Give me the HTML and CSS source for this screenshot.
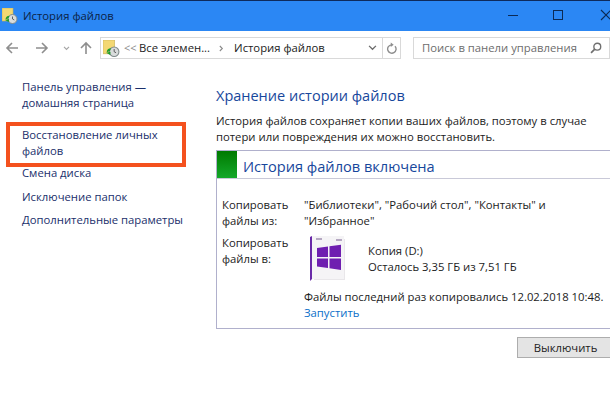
FILE: index.html
```html
<!DOCTYPE html>
<html lang="ru">
<head>
<meta charset="utf-8">
<title>История файлов</title>
<link rel="stylesheet" href="styles.css">
</head>
<body>
<div class="window">
  <header class="titlebar">
    <svg class="app-icon" viewBox="0 0 16 16" width="16" height="16"><rect x="0" y="0" width="11" height="13" fill="#f3d873"/><rect x="0" y="0" width="11" height="13" fill="none" stroke="#c9b35c" stroke-width=".6"/><circle cx="10.500" cy="11" r="4.500" fill="#d9dcdc" stroke="#7f8a8a"/><path d="M10.500 8.500V11l1.800 1" fill="none" stroke="#444" stroke-width=".8"/><path d="M3.500 11.500a4 4 0 0 1 4-3.800l-1 2.600z M3 12l3.800 2 .3-3z" fill="#1f9e2c"/></svg>
    <span class="title">История файлов</span>
    <div class="controls">
      <span class="ctl-min"></span>
      <span class="ctl-max"></span>
      <svg class="ctl-close" viewBox="0 0 12 12" width="12" height="12"><path d="M1 1l10 10M11 1L1 11" stroke="#0b2a55" stroke-width="1.100"/></svg>
    </div>
  </header>

  <nav class="toolbar">
    <svg class="nav nav-back" viewBox="0 0 14 14" width="14" height="14"><path d="M13 7H2M7 2L2 7l5 5" fill="none" stroke="#8e8e8e" stroke-width="1.600"/></svg>
    <svg class="nav nav-fwd" viewBox="0 0 14 14" width="14" height="14"><path d="M1 7h11M7 2l5 5-5 5" fill="none" stroke="#8e8e8e" stroke-width="1.600"/></svg>
    <svg class="nav nav-down" viewBox="0 0 8 6" width="7" height="5"><path d="M1 1l3 3 3-3" fill="none" stroke="#a5a5a5" stroke-width="1.400"/></svg>
    <svg class="nav nav-up" viewBox="0 0 14 14" width="14" height="14"><path d="M7 13V2M2 7l5-5 5 5" fill="none" stroke="#8e8e8e" stroke-width="1.600"/></svg>
    <div class="address">
      <svg class="addr-icon" viewBox="0 0 16 16" width="17" height="17"><rect x="0" y="0" width="11" height="13" fill="#f3d873"/><rect x="0" y="0" width="11" height="13" fill="none" stroke="#c9b35c" stroke-width=".6"/><circle cx="10.500" cy="11" r="4.500" fill="#d9dcdc" stroke="#7f8a8a"/><path d="M10.500 8.500V11l1.800 1" fill="none" stroke="#444" stroke-width=".8"/><path d="M3.500 11.500a4 4 0 0 1 4-3.800l-1 2.600z M3 12l3.800 2 .3-3z" fill="#1f9e2c"/></svg>
      <span class="crumb-more">&lt;&lt;</span>
      <span class="crumb">Все элемен...</span>
      <svg class="crumb-sep" viewBox="0 0 6 8" width="5" height="7"><path d="M1 1l3 3-3 3" fill="none" stroke="#8a8a8a" stroke-width="1.300"/></svg>
      <span class="crumb">История файлов</span>
      <svg class="addr-down" viewBox="0 0 10 7" width="9" height="6"><path d="M1 1l4 4 4-4" fill="none" stroke="#6b6b6b" stroke-width="1.500"/></svg>
      <span class="addr-refresh">
        <svg viewBox="0 0 12 14" width="11" height="13"><path d="M9.800 4.500A4.600 4.600 0 1 1 6 3" fill="none" stroke="#8e8e8e" stroke-width="1.500"/><path d="M5.200 .4L8.400 3 5.200 5.400z" fill="#8e8e8e"/></svg>
      </span>
    </div>
    <div class="search">
      <span>Поиск в панели управления</span>
      <svg viewBox="0 0 14 14" width="12" height="12"><circle cx="8.500" cy="5.500" r="4" fill="none" stroke="#6f6f6f" stroke-width="1.600"/><path d="M5.600 8.400L1.200 12.800" stroke="#6f6f6f" stroke-width="2"/></svg>
    </div>
  </nav>

  <div class="main">
    <aside class="sidebar">
      <a class="side-home">Панель управления — домашняя страница</a>
      <div class="side-restore">
        <a>Восстановление личных файлов</a>
        <span class="highlight"></span>
      </div>
      <a class="side-item">Смена диска</a>
      <a class="side-item">Исключение папок</a>
      <a class="side-item">Дополнительные параметры</a>
    </aside>

    <section class="content">
      <h1>Хранение истории файлов</h1>
      <p class="intro">История файлов сохраняет копии ваших файлов, поэтому в случае потери или повреждения их можно восстановить.</p>
      <div class="card">
        <div class="card-head">
          <span class="status"></span>
          <h2>История файлов включена</h2>
        </div>
        <div class="card-body">
          <div class="label">Копировать файлы из:</div>
          <div class="value">"Библиотеки", "Рабочий стол", "Контакты" и "Избранное"</div>
          <div class="label">Копировать файлы в:</div>
          <div class="drive">
            <svg class="box" viewBox="0 0 40 48" width="40" height="48">
              <path d="M6 4h31v41H6z" fill="#e9e7ea"/>
              <path d="M4 1h32v43H4z" fill="#f5f4f6"/>
              <path d="M2 2l2-1v43l-2 2z" fill="#6a2aa8"/>
              <path d="M9 13l11-1.500V22H9zM21.500 11.300L33 9.800V22H21.500zM9 23.500h11V33l-11-1.500zM21.500 23.500H33V35l-11.500-1.700z" fill="#6f1fb0"/>
              <path d="M8 3h6v2H8zM28 4h6v2h-6z" fill="#b5a8c2"/>
            </svg>
            <div class="drive-text">
              <div>Копия (D:)</div>
              <div>Осталось 3,35 ГБ из 7,51 ГБ</div>
            </div>
          </div>
          <div class="last">
            <div>Файлы последний раз копировались 12.02.2018 10:48.</div>
            <a class="run">Запустить</a>
          </div>
        </div>
      </div>
      <div class="actions"><button class="off">Выключить</button></div>
    </section>
  </div>
</div>
</body>
</html>
```

FILE: styles.css
```css
* { box-sizing: border-box; }
html, body { margin: 0; padding: 0; background: #fff; }
body {
  width: 610px;
  height: 407px;
  overflow: hidden;
  font: 11.300px/15.500px "Open Sans", "Noto Sans", sans-serif;
  color: #1c1c1c;
}
.window { width: 610px; height: 407px; overflow: hidden; }

.titlebar {
  height: 31px;
  background: #2b87f4;
  border-top: 1px solid #0e2a5c;
  display: flex;
  align-items: center;
  padding-left: 2px;
  color: #0b2346;
}
.app-icon { flex: none; margin-right: 5px; }
.controls { margin-left: auto; margin-right: -2px; margin-bottom: 2px; display: flex; align-items: center; }
.ctl-min { width: 10px; height: 1px; background: #0b2a55; }
.ctl-max { width: 10px; height: 10px; border: 1px solid #0b2a55; margin-left: 35px; }
.ctl-close { margin-left: 37px; flex: none; }

.toolbar {
  height: 28px;
  padding-top: 6px;
  display: flex;
  align-items: center;
  background: #fff;
}
.nav { flex: none; }
.nav-back { margin-left: 5px; }
.nav-fwd { margin-left: 16px; }
.nav-down { margin-left: 14px; }
.nav-up { margin-left: 9px; }
.address {
  margin-left: 7px;
  width: 301px;
  height: 22px;
  border: 1px solid #d9d9d9;
  display: flex;
  align-items: center;
  flex: none;
  color: #222;
}
.addr-icon { flex: none; margin-left: 2px; }
.crumb-more { color: #8a8a8a; margin-left: 4px; width: 15px; font-size: 11px; }
.crumb-sep { margin: 0 10px 0 9px; flex: none; }
.addr-down { margin-left: auto; margin-right: 5px; flex: none; }
.addr-refresh {
  width: 18px;
  height: 20px;
  border-left: 1px solid #d9d9d9;
  display: flex;
  align-items: center;
  justify-content: center;
}
.search {
  margin-left: 12px;
  flex: 1;
  height: 22px;
  border: 1px solid #d9d9d9;
  display: flex;
  align-items: center;
  justify-content: space-between;
  padding: 0 7px 0 8px;
  color: #6d6d6d;
}

.main { display: flex; }
.sidebar {
  width: 216px;
  flex: none;
  padding: 20px 22px 0;
  color: #1a2f6b;
  display: flex;
  flex-direction: column;
}
.sidebar a { display: block; }
.side-home { width: 140px; }
.side-restore { position: relative; margin-top: 17px; width: 150px; height: 32px; }
.highlight {
  position: absolute;
  left: -16px;
  top: -5px;
  width: 180px;
  height: 45px;
  border: 4px solid #f4511e;
}
.side-item { margin-top: 8px; }
.side-restore + .side-item { margin-top: 6px; }

.content { flex: 1; min-width: 0; padding-top: 27px; }
h1 {
  margin: 0;
  font-size: 14.500px;
  line-height: 20px;
  font-weight: 400;
  color: #17479c;
}
.intro { margin: 7px 0 0; width: 390px; }
.card {
  margin-top: 6px;
  width: 420px;
  height: 179px;
  border: 1px solid #b0b0cc;
  border-right: 0;
}
.card-head {
  height: 28px;
  display: flex;
  border-bottom: 1px solid #c9c9d8;
}
.status { width: 20px; height: 27px; background: linear-gradient(#007a00, #14a82a); flex: none; }
.card-head h2 {
  margin: 0 0 0 6px;
  font-size: 14.600px;
  line-height: 30px;
  font-weight: 400;
  color: #17479c;
}
.card-body {
  padding: 18px 0 0 5px;
  display: grid;
  grid-template-columns: 82px 1fr;
  row-gap: 7px;
}
.value { width: 245px; }
.drive { display: flex; align-items: flex-start; }
.box { flex: none; margin-left: 4px; }
.drive-text { margin-left: 20px; margin-top: 8px; }
.last { grid-column: 2; margin-top: -1px; }
.run { color: #0a6fc9; display: block; }
.actions { display: flex; justify-content: flex-end; margin-top: 8px; margin-right: -4px; }
.off {
  width: 97px;
  height: 21px;
  padding: 0;
  border: 1px solid #adadad;
  background: #e4e4e4;
  font: inherit;
  color: #1c1c1c;
}
```
